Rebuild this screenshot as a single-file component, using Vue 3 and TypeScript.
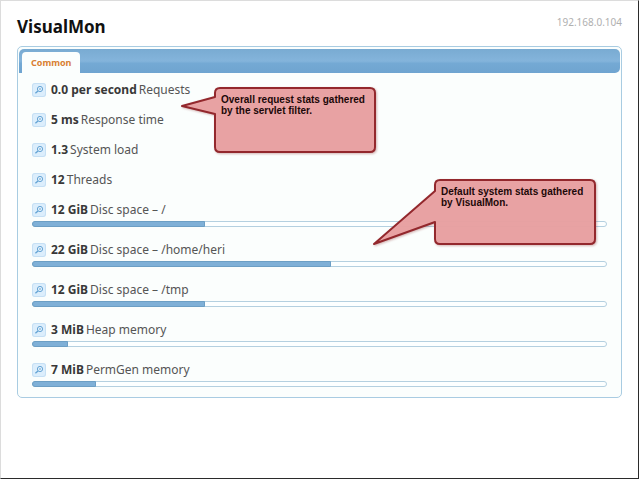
<script setup lang="ts">
interface Stat {
  value: string
  label: string
  percent?: number
}

interface Callout {
  id: string
  lines: string[]
  path: string
  width: number
  height: number
}

const host = '192.168.0.104'

const stats: Stat[] = [
  { value: '0.0 per second', label: 'Requests' },
  { value: '5 ms', label: 'Response time' },
  { value: '1.3', label: 'System load' },
  { value: '12', label: 'Threads' },
  { value: '12 GiB', label: 'Disc space – /', percent: 30.2 },
  { value: '22 GiB', label: 'Disc space – /home/heri', percent: 52.1 },
  { value: '12 GiB', label: 'Disc space – /tmp', percent: 30.2 },
  { value: '3 MiB', label: 'Heap memory', percent: 6.2 },
  { value: '7 MiB', label: 'PermGen memory', percent: 11.2 },
]

const callouts: Callout[] = [
  {
    id: 'requests',
    lines: ['Overall request stats gathered', 'by the servlet filter.'],
    width: 200,
    height: 72,
    path: 'M40 3H189Q194 3 194 8V62Q194 67 189 67H39Q34 67 34 62V29L1 21L34 12V8Q34 3 39 3Z',
  },
  {
    id: 'system',
    lines: ['Default system stats gathered', 'by VisualMon.'],
    width: 228,
    height: 72,
    path: 'M67 3H217Q222 3 222 8V62Q222 67 217 67H67Q62 67 62 62V45L1 67L62 14V8Q62 3 67 3Z',
  },
]
</script>

<template>
  <div class="page">
    <header class="top">
      <h1>VisualMon</h1>
      <span class="host">{{ host }}</span>
    </header>

    <main class="panel">
      <nav class="tabs">
        <a class="tab" href="#common">Common</a>
      </nav>
      <ul id="common" class="stats">
        <li v-for="stat in stats" :key="stat.label" class="stat">
          <div class="line">
            <button class="zoom" type="button" :aria-label="`Show ${stat.label}`">
              <svg viewBox="0 0 14 14" width="14" height="14" aria-hidden="true">
                <circle cx="8" cy="6" r="2.6" fill="#e4f2fd" stroke="#64a4d4" />
                <path d="M7 6h2" stroke="#64a4d4" fill="none" />
                <path d="M6 8L3.4 10.2" stroke="#64a4d4" stroke-width="1.4" fill="none" />
              </svg>
            </button>
            <span class="text"><strong>{{ stat.value }}</strong>{{ stat.label }}</span>
          </div>
          <div
            v-if="stat.percent !== undefined"
            class="bar"
            role="progressbar"
            :aria-label="stat.label"
            :aria-valuenow="stat.percent"
          >
            <div class="fill" :style="{ width: stat.percent + '%' }"></div>
          </div>
        </li>
      </ul>

      <aside v-for="note in callouts" :key="note.id" class="callout" :class="note.id">
        <svg
          class="bubble"
          :viewBox="`0 0 ${note.width} ${note.height}`"
          :width="note.width"
          :height="note.height"
          aria-hidden="true"
        >
          <path :d="note.path" />
        </svg>
        <p>
          <span v-for="line in note.lines" :key="line">{{ line }}</span>
        </p>
      </aside>
    </main>
  </div>
</template>

<style>
body {
  background: #fff;
}
</style>

<style scoped>
.page {
  box-sizing: border-box;
  min-height: 100vh;
  padding: 16px;
  border: 1px solid #dcdcdc;
  border-right-color: #2b2b2b;
  border-bottom-color: #2b2b2b;
  font-family: "Noto Sans", "Open Sans", sans-serif;
  font-size: 12px;
  color: #555;
}

.top {
  display: flex;
  justify-content: space-between;
  align-items: flex-start;
  height: 29px;
}

h1 {
  margin: 0;
  font-size: 17px;
  line-height: 20px;
  color: #111;
}

.host {
  font-size: 10px;
  line-height: 10px;
  color: #b0b0b0;
}

.panel {
  position: relative;
  padding: 2px 1px 10px 1px;
  border: 1px solid #a9cce2;
  border-radius: 5px;
  background: #fbfefd;
}

.tabs {
  display: flex;
  height: 21px;
  padding: 3px 3px 0;
  border-radius: 5px 5px 5px 0;
  background: linear-gradient(#79abd2, #84b4db 50%, #74a9d4 60%, #6fa4d0);
}

.tab {
  padding: 0 9px;
  border-radius: 4px 4px 0 0;
  background: #fbfefd;
  color: #d98032;
  font-size: 9px;
  font-weight: bold;
  line-height: 21px;
  text-decoration: none;
}

.stats {
  display: flex;
  flex-direction: column;
  gap: 16px;
  margin: 0;
  padding: 10px 13px 0;
  list-style: none;
}

.stat {
  display: flex;
  flex-direction: column;
  gap: 4px;
}

.line {
  display: flex;
  align-items: center;
  gap: 5px;
  height: 14px;
}

.zoom {
  box-sizing: border-box;
  flex: none;
  width: 14px;
  height: 14px;
  padding: 0;
  border: 0;
  border-radius: 3px;
  background: #dceefc;
  box-shadow: inset 0 0 0 1px #c6e0f4;
}

.zoom svg {
  display: block;
}

.text {
  line-height: 14px;
  white-space: nowrap;
}

.text strong {
  margin-right: 2px;
  color: #383838;
}

.bar {
  box-sizing: border-box;
  height: 6px;
  border: 1px solid #b4d0e0;
  border-radius: 3px;
  background: #fcffff;
}

.fill {
  box-sizing: border-box;
  height: 6px;
  margin: -1px 0 0 -1px;
  border: 1px solid #6c9fc5;
  border-radius: 3px 0 0 3px;
  background: #7fb0d7;
}

.callout {
  position: absolute;
}

.requests {
  top: 38px;
  left: 163px;
}

.system {
  top: 130px;
  left: 355px;
}

.bubble {
  display: block;
  overflow: visible;
  filter: drop-shadow(1px 1px 1px rgba(150, 70, 70, 0.4));
}

.bubble path {
  fill: rgba(234, 162, 163, 0.94);
  stroke: #93282d;
  stroke-width: 2;
  stroke-linejoin: round;
}

.callout p {
  position: absolute;
  top: 9px;
  right: 0;
  width: 160px;
  margin: 0;
  color: #1c0808;
  font-family: "Liberation Sans", Arial, sans-serif;
  font-size: 10px;
  font-weight: bold;
  line-height: 11px;
}

.callout p span {
  display: block;
}
</style>
